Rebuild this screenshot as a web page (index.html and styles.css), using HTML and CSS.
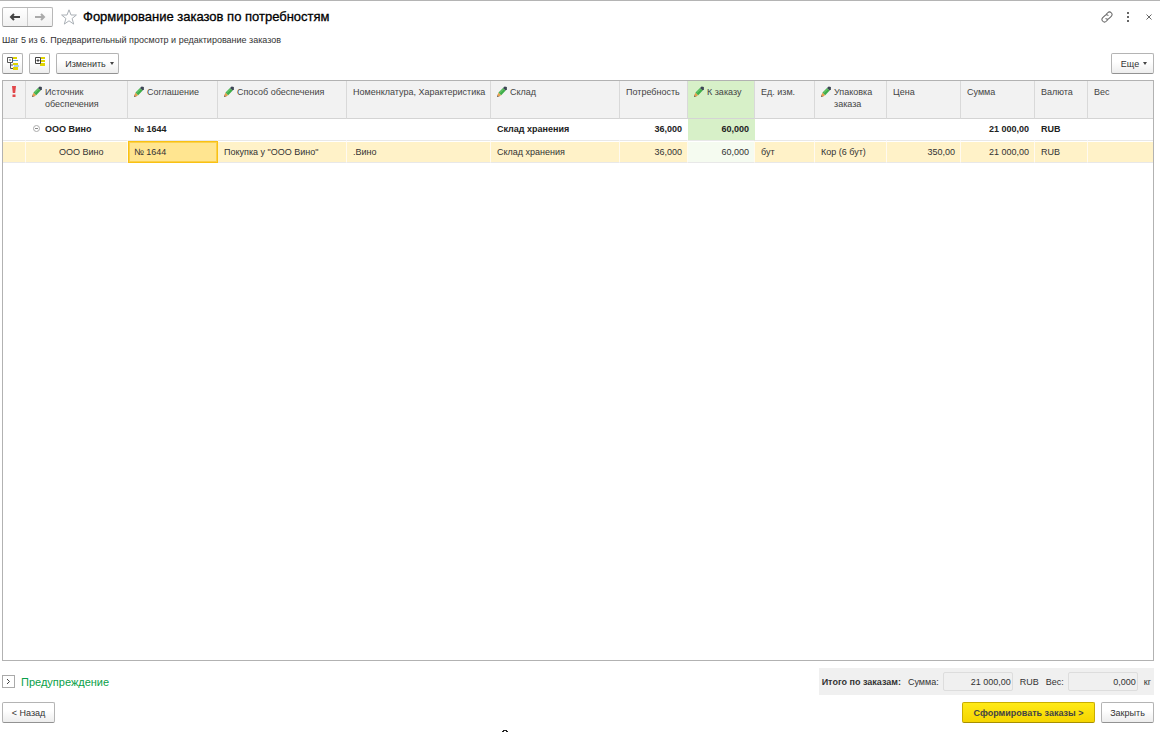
FILE: index.html
```html
<!DOCTYPE html>
<html lang="ru">
<head>
<meta charset="utf-8">
<title>Формирование заказов по потребностям</title>
<link rel="stylesheet" href="styles.css">
</head>
<body>
<svg class="defs" aria-hidden="true">
  <symbol id="pencil" viewBox="0 0 10 12">
    <path d="M0 11 1 8 3 10z" fill="#4a3a28"/>
    <path d="M.5 9.500 1.500 6.500 4.200 9.200 1.600 10.500z" fill="#e9a04d"/>
    <path d="M1.500 6.500 6 2 8.700 4.600 4.200 9.200z" fill="#3fae49"/>
    <path d="M2.600 6.900 6.800 2.800" stroke="#78cf76" stroke-width="1"/>
    <path d="M6 2 7.600.6 9.900.9 9.900 3.300 8.700 4.600z" fill="#3d4655"/>
  </symbol>
</svg>
<div class="page">
  <header class="titlebar">
    <div class="nav">
      <button class="nav-btn" aria-label="Назад"><svg width="12" height="8" viewBox="0 0 12 8"><path d="M11 4H2M5 1 2 4l3 3" fill="none" stroke="#444" stroke-width="2"/></svg></button>
      <button class="nav-btn" aria-label="Вперед"><svg width="12" height="8" viewBox="0 0 12 8"><path d="M1 4h9M7 1l3 3-3 3" fill="none" stroke="#aaa" stroke-width="2"/></svg></button>
    </div>
    <button class="icon-btn star" aria-label="Избранное"><svg width="16" height="16" viewBox="0 0 16 16"><path d="M8 .8 10 6h5.400l-4.300 3.500 1.600 5.600L8 11.800l-4.700 3.300 1.600-5.600L.6 6H6z" fill="#fff" stroke="#aab0b6"/></svg></button>
    <h1>Формирование заказов по потребностям</h1>
    <div class="window-tools">
      <button class="icon-btn" aria-label="Ссылка"><svg width="12" height="12" viewBox="0 0 12 12"><g transform="rotate(-45 6 6)" fill="none" stroke="#666"><path d="M5 8.500H2.500a2.500 2.500 0 0 1 0-5h3A2.500 2.500 0 0 1 8 6"/><path d="M7 3.500h2.500a2.500 2.500 0 0 1 0 5h-3A2.500 2.500 0 0 1 4 6"/></g></svg></button>
      <button class="icon-btn" aria-label="Меню"><svg width="4" height="10" viewBox="0 0 4 10"><path d="M1 0h2v2H1zM1 4h2v2H1zM1 8h2v2H1z" fill="#666"/></svg></button>
      <button class="icon-btn" aria-label="Закрыть окно"><svg width="6" height="6" viewBox="0 0 6 6"><path d="m.5.5 5 5m0-5-5 5" stroke="#666"/></svg></button>
    </div>
  </header>
  <p class="step">Шаг 5 из 6. Предварительный просмотр и редактирование заказов</p>
  <div class="toolbar">
    <button class="btn square" aria-label="Свернуть все"><svg width="12" height="13" viewBox="0 0 12 13"><path d="M6 0h4v2H6zM6 6h5v2H6zM6 10h5v3H6z" fill="#e0d400"/><path d="M6 3.500h5M7 9h5" stroke="#5aa5dc"/><path d="M.5.5h5v5h-5zM2 3h2M3.500 6v5.500H6M3.500 8H6" fill="none" stroke="#555"/></svg></button>
    <button class="btn square" aria-label="Развернуть все"><svg class="raised" width="12" height="9" viewBox="0 0 12 9"><path d="M7 0h4v2H7zM7 3h4v2H7zM6 6h5v3H6z" fill="#e0d400"/><path d="M1.500.5h5v6h-5zM2.500 3.500h3M4 2v3" fill="none" stroke="#444"/></svg></button>
    <button class="btn edit">Изменить <span class="caret"></span></button>
    <button class="btn more">Еще <span class="caret"></span></button>
  </div>
  <main class="grid">
    <table>
      <colgroup><col class="w23"><col class="w102"><col class="w90"><col class="w129"><col class="w144"><col class="w129"><col class="w68"><col class="w67"><col class="w60"><col class="w72"><col class="w74"><col class="w74"><col class="w53"><col></colgroup>
      <thead>
        <tr>
          <th class="alert"><svg width="4" height="11" viewBox="0 0 4 11"><path d="M0 0h4l-.8 7H.8zM.5 8.500h3V11h-3z" fill="#e2474a"/></svg></th>
          <th><div class="head"><svg class="pen"><use href="#pencil"/></svg><span>Источник обеспечения</span></div></th>
          <th><div class="head"><svg class="pen"><use href="#pencil"/></svg><span>Соглашение</span></div></th>
          <th><div class="head"><svg class="pen"><use href="#pencil"/></svg><span>Способ обеспечения</span></div></th>
          <th>Номенклатура, Характеристика</th>
          <th><div class="head"><svg class="pen"><use href="#pencil"/></svg><span>Склад</span></div></th>
          <th>Потребность</th>
          <th class="order"><div class="head"><svg class="pen"><use href="#pencil"/></svg><span>К заказу</span></div></th>
          <th>Ед. изм.</th>
          <th><div class="head"><svg class="pen"><use href="#pencil"/></svg><span>Упаковка заказа</span></div></th>
          <th>Цена</th>
          <th>Сумма</th>
          <th>Валюта</th>
          <th>Вес</th>
        </tr>
      </thead>
      <tbody>
        <tr class="group">
          <td></td>
          <td><div class="tree"><svg width="7" height="7" viewBox="0 0 7 7"><circle cx="3.500" cy="3.500" r="3" fill="none" stroke="#aaa"/><path d="M2 3.500h3" stroke="#888"/></svg>ООО Вино</div></td>
          <td>№ 1644</td><td></td><td></td><td>Склад хранения</td>
          <td class="num">36,000</td><td class="num order">60,000</td>
          <td></td><td></td><td></td><td class="num">21 000,00</td><td>RUB</td><td></td>
        </tr>
        <tr class="selected">
          <td></td><td class="child">ООО Вино</td><td class="current">№ 1644</td>
          <td>Покупка у "ООО Вино"</td><td>.Вино</td><td>Склад хранения</td>
          <td class="num">36,000</td><td class="num order">60,000</td>
          <td>бут</td><td>Кор (6 бут)</td><td class="num">350,00</td><td class="num">21 000,00</td><td>RUB</td><td></td>
        </tr>
      </tbody>
    </table>
  </main>
  <div class="summary">
    <button class="expand" aria-label="Развернуть"><svg width="5" height="7" viewBox="0 0 5 7"><path d="m1 1 2.500 2.500L1 6" fill="none" stroke="#444"/></svg></button>
    <span class="warning">Предупреждение</span>
    <div class="totals">
      <strong>Итого по заказам:</strong>
      <label for="sum">Сумма:</label><input id="sum" value="21 000,00" readonly>
      <span class="currency">RUB</span>
      <label for="weight">Вес:</label><input id="weight" value="0,000" readonly>
      <span class="unit">кг</span>
    </div>
  </div>
  <footer class="actions">
    <button class="btn back">&lt; Назад</button>
    <button class="btn primary">Сформировать заказы &gt;</button>
    <button class="btn close">Закрыть</button>
  </footer>
  <svg class="edge-mark" width="6" height="2" viewBox="0 0 6 2" aria-hidden="true"><path d="M1 0h4v1H1zM0 1h2v1H0zM4 1h2v1H4z" fill="#222"/></svg>
</div>
</body>
</html>
```
FILE: styles.css
```css
* { box-sizing: border-box; }
body { margin: 0; background: #fff; color: #333; font: 9px/12px "Liberation Sans", Arial, sans-serif; }
button, input { font: inherit; color: inherit; margin: 0; }
button { padding: 0; }
svg { display: block; flex: none; }
.defs { display: none; }
.page { position: relative; min-height: 100vh; display: flex; flex-direction: column; border-top: 1px solid #b4b4b4; padding: 6px 6px 9px 2px; }
.titlebar { display: flex; align-items: center; height: 20px; }
.nav { display: flex; width: 51px; height: 20px; border: 1px solid #b8b8b8; border-bottom-color: #999; border-radius: 2px; background: linear-gradient(#fff, #f1f1f1); }
.nav-btn { flex: 1; display: flex; align-items: center; justify-content: center; border: 0; background: none; }
.nav-btn + .nav-btn { border-left: 1px solid #ccc; }
.icon-btn { border: 0; background: none; }
.star { margin: 0 6px 0 8px; }
h1 { margin: 0; font-size: 13px; line-height: 20px; font-weight: 400; color: #000; -webkit-text-stroke: 0.3px #000; }
.window-tools { margin-left: auto; padding-right: 2px; display: flex; align-items: center; gap: 13px; }
.window-tools .icon-btn:last-child { margin-left: 3px; }
.step { margin: 7px 0; }
.toolbar { display: flex; gap: 6px; margin-bottom: 6px; }
.btn { height: 21px; border: 1px solid #b4b4b4; border-bottom-color: #929292; border-radius: 2px; background: linear-gradient(#fff 40%, #ededed); display: flex; align-items: center; justify-content: center; gap: 4px; }
.square { width: 21px; }
.raised { margin-bottom: 4px; }
.caret { border: 2px solid transparent; border-top: 3px solid #444; border-bottom: 0; }
.edit { width: 63px; padding-left: 4px; }
.more { width: 43px; padding-left: 3px; margin-left: auto; }
.grid { flex: 1; border: 1px solid #b2b2b2; }
table { width: 100%; table-layout: fixed; border-collapse: separate; border-spacing: 0; }
.w23 { width: 23px; } .w53 { width: 53px; } .w60 { width: 60px; } .w67 { width: 67px; } .w68 { width: 68px; }
.w72 { width: 72px; } .w74 { width: 74px; } .w90 { width: 90px; } .w102 { width: 102px; } .w129 { width: 129px; } .w144 { width: 144px; }
th { height: 38px; padding: 5px 4px 0 6px; background: #f2f2f2; border-right: 1px solid #d9d9d9; border-bottom: 1px solid #d4d4d4; font-weight: 400; text-align: left; vertical-align: top; white-space: nowrap; color: #444; }
th:last-child, td:last-child { border-right: 0; }
th.alert { padding-left: 9px; }
.head { display: flex; gap: 3px; white-space: normal; }
.pen { width: 10px; height: 12px; }
td { height: 22px; padding: 0 5px 0 6px; white-space: nowrap; border-right: 1px solid #fff; border-bottom: 1px solid #e8e8e8; }
.group td { padding-bottom: 2px; font-weight: 700; color: #222; border-right-color: transparent; }
.selected td { background: #fff2c8; background-clip: padding-box; border-top: 1px solid #fff; border-right-color: #fffaf0; }
.num { text-align: right; }
th.order, .group .order { background: #d7f0c8; }
.selected .order { background-color: #f5fbf0; }
.tree { display: flex; align-items: center; gap: 5px; padding-left: 1px; }
.selected .child { padding-left: 33px; }
.selected .current { padding-left: 5px; background: #ffe590; border: 1px solid #f9c113; box-shadow: inset 0 0 0 1px #fbd04a; }
.summary { display: flex; align-items: center; margin-top: 7px; }
.expand { width: 13px; height: 13px; display: flex; align-items: center; justify-content: center; border: 1px solid #aaa; background: #fff; }
.warning { margin-left: 6px; font-size: 11px; line-height: 16px; color: #0a9f49; }
.totals { margin-left: auto; height: 27px; display: flex; align-items: center; padding: 0 3px; background: #f0f0f0; }
.totals strong { color: #333; margin-right: 7px; }
.totals input { width: 70px; height: 19px; margin-left: 4px; padding: 0 1px; text-align: right; border: 1px solid #ddd; border-radius: 2px; background: #f0f0f0; }
.currency { margin: 0 7px; }
.unit { margin-left: 6px; }
.actions { display: flex; gap: 6px; margin-top: 7px; }
.back { width: 53px; margin-right: auto; }
.primary { width: 133px; font-weight: 700; color: #444; border-color: #c9ad00; border-bottom-color: #a78f00; background: linear-gradient(#ffea17, #f5d500); }
.close { width: 53px; }
.edge-mark { position: absolute; bottom: 0; left: 502px; }
```
